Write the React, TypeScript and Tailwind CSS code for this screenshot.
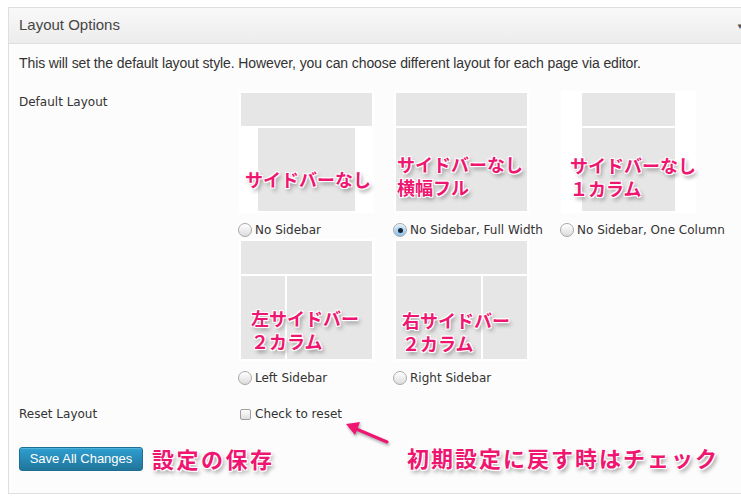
import React from "react";

const ui = "font-['DejaVu_Sans',sans-serif]";
const jp =
  "font-['Noto_Sans_CJK_JP',sans-serif] font-bold text-[#ee1670] [text-shadow:1px_1px_0_#fff,-1px_-1px_0_#fff,1px_-1px_0_#fff,-1px_1px_0_#fff,0_0_3px_#fff,2px_3px_4px_rgba(0,0,0,0.45)]";

type Kind = "none" | "full" | "one" | "left" | "right";

function Thumb({ kind }: { kind: Kind }) {
  const narrow = kind === "one";
  return (
    <div className="w-[135px] h-[122px] bg-white p-[2px] flex flex-col gap-[2px]">
      <div className={`h-[33px] bg-[#e5e6e5] ${narrow ? "mx-[19px]" : ""}`} />
      {kind === "left" || kind === "right" ? (
        <div className="flex-1 flex gap-[2px]">
          {kind === "left" && <div className="w-[44px] bg-[#e5e6e5]" />}
          <div className="flex-1 bg-[#e5e6e5]" />
          {kind === "right" && <div className="w-[44px] bg-[#e5e6e5]" />}
        </div>
      ) : (
        <div
          className={`flex-1 bg-[#e5e6e5] ${
            kind === "none" ? "mx-[17px]" : narrow ? "mx-[19px]" : ""
          }`}
        />
      )}
    </div>
  );
}

function Radio({ checked }: { checked?: boolean }) {
  return (
    <span
      className={`w-[14px] h-[14px] rounded-full border border-[#a8a8a8] flex items-center justify-center shadow-[inset_0_1px_1px_rgba(255,255,255,0.9)] ${
        checked
          ? "bg-gradient-to-b from-[#d6ebfb] to-[#8cc1ea] border-[#6d96ba]"
          : "bg-gradient-to-b from-white to-[#dcdcdc]"
      }`}
    >
      {checked && <span className="w-[5px] h-[5px] rounded-full bg-[#1c2733]" />}
    </span>
  );
}

function Option({ kind, label, width, checked }: { kind: Kind; label: string; width: string; checked?: boolean }) {
  return (
    <div className={`${width} flex flex-col`}>
      <div className="pl-[1px]">
        <Thumb kind={kind} />
      </div>
      <label className={`mt-[10px] h-[14px] flex items-center gap-[3px] text-[12px] text-[#333] ${ui}`}>
        <Radio checked={checked} />
        <span>{label}</span>
      </label>
    </div>
  );
}

export default function App() {
  return (
    <div className="relative w-[741px] h-[503px] overflow-hidden bg-white pt-[7px] pl-[8px]">
      <div className="w-[745px] border border-[#dfdfdf] bg-[#fcfcfc]">
        <div className="h-[36px] flex items-center pl-[10px] border-b border-[#dfdfdf] bg-gradient-to-b from-[#f9f9f9] to-[#ececec]">
          <h3 className="text-[15px] text-[#464646] font-['Liberation_Sans',sans-serif]">Layout Options</h3>
          <span className="ml-auto mr-[8px] text-[8px] text-[#555]">▼</span>
        </div>
        <div className="pl-[10px] pt-[11px] pb-[22px]">
          <p className="text-[14px] text-[#333] leading-[16px] font-['Liberation_Sans',sans-serif] tracking-[-0.1px]">
            This will set the default layout style. However, you can choose different layout for each page via editor.
          </p>
          <div className="grid grid-cols-[219px_1fr] mt-[20px]">
            <div className={`text-[12px] text-[#333] pt-[2px] ${ui}`}>Default Layout</div>
            <div className="flex flex-col gap-[2px]">
              <div className="flex">
                <Option kind="none" label="No Sidebar" width="w-[155px]" />
                <Option kind="full" label="No Sidebar, Full Width" width="w-[167px]" checked />
                <Option kind="one" label="No Sidebar, One Column" width="w-[170px]" />
              </div>
              <div className="flex">
                <Option kind="left" label="Left Sidebar" width="w-[155px]" />
                <Option kind="right" label="Right Sidebar" width="w-[167px]" />
              </div>
            </div>
            <div className={`text-[12px] text-[#333] mt-[20px] ${ui}`}>Reset Layout</div>
            <label className={`mt-[20px] flex items-center gap-[4px] text-[12px] text-[#333] ${ui}`}>
              <span className="ml-[2px] w-[11px] h-[11px] rounded-[2px] border border-[#a0a0a0] bg-gradient-to-b from-white to-[#dedede]" />
              <span>Check to reset</span>
            </label>
          </div>
          <button className="mt-[24px] w-[124px] h-[24px] rounded-[3px] border border-[#1f6e93] bg-gradient-to-b from-[#2e9fd2] to-[#21759b] text-white text-[13px] font-['Liberation_Sans',sans-serif] shadow-[inset_0_1px_0_rgba(120,200,230,0.5)]">
            Save All Changes
          </button>
        </div>
      </div>

      <span className={`absolute left-[245px] top-[167px] text-[18px] leading-[24px] ${jp}`}>サイドバーなし</span>
      <span className={`absolute left-[397px] top-[153px] text-[18px] leading-[23px] ${jp}`}>
        サイドバーなし
        <br />
        横幅フル
      </span>
      <span className={`absolute left-[570px] top-[154px] text-[18px] leading-[23px] ${jp}`}>
        サイドバーなし
        <br />
        １カラム
      </span>
      <span className={`absolute left-[251px] top-[307px] text-[18px] leading-[23px] ${jp}`}>
        左サイドバー
        <br />
        ２カラム
      </span>
      <span className={`absolute left-[402px] top-[309px] text-[18px] leading-[23px] ${jp}`}>
        右サイドバー
        <br />
        ２カラム
      </span>
      <span className={`absolute left-[152px] top-[443px] text-[22px] leading-[30px] tracking-[2.5px] ${jp}`}>設定の保存</span>
      <span className={`absolute left-[407px] top-[442px] text-[22px] leading-[30px] tracking-[2px] ${jp}`}>
        初期設定に戻す時はチェック
      </span>
      <svg className="absolute left-[340px] top-[418px]" width="56" height="32" viewBox="0 0 56 32">
        <g style={{ filter: "drop-shadow(1px 2px 1.5px rgba(0,0,0,0.35))" }}>
          <line x1="47" y1="24" x2="14" y2="10" stroke="#ee1670" strokeWidth="3" strokeLinecap="round" />
          <polygon points="6,6 20,4 15,17" fill="#ee1670" />
        </g>
      </svg>
    </div>
  );
}
